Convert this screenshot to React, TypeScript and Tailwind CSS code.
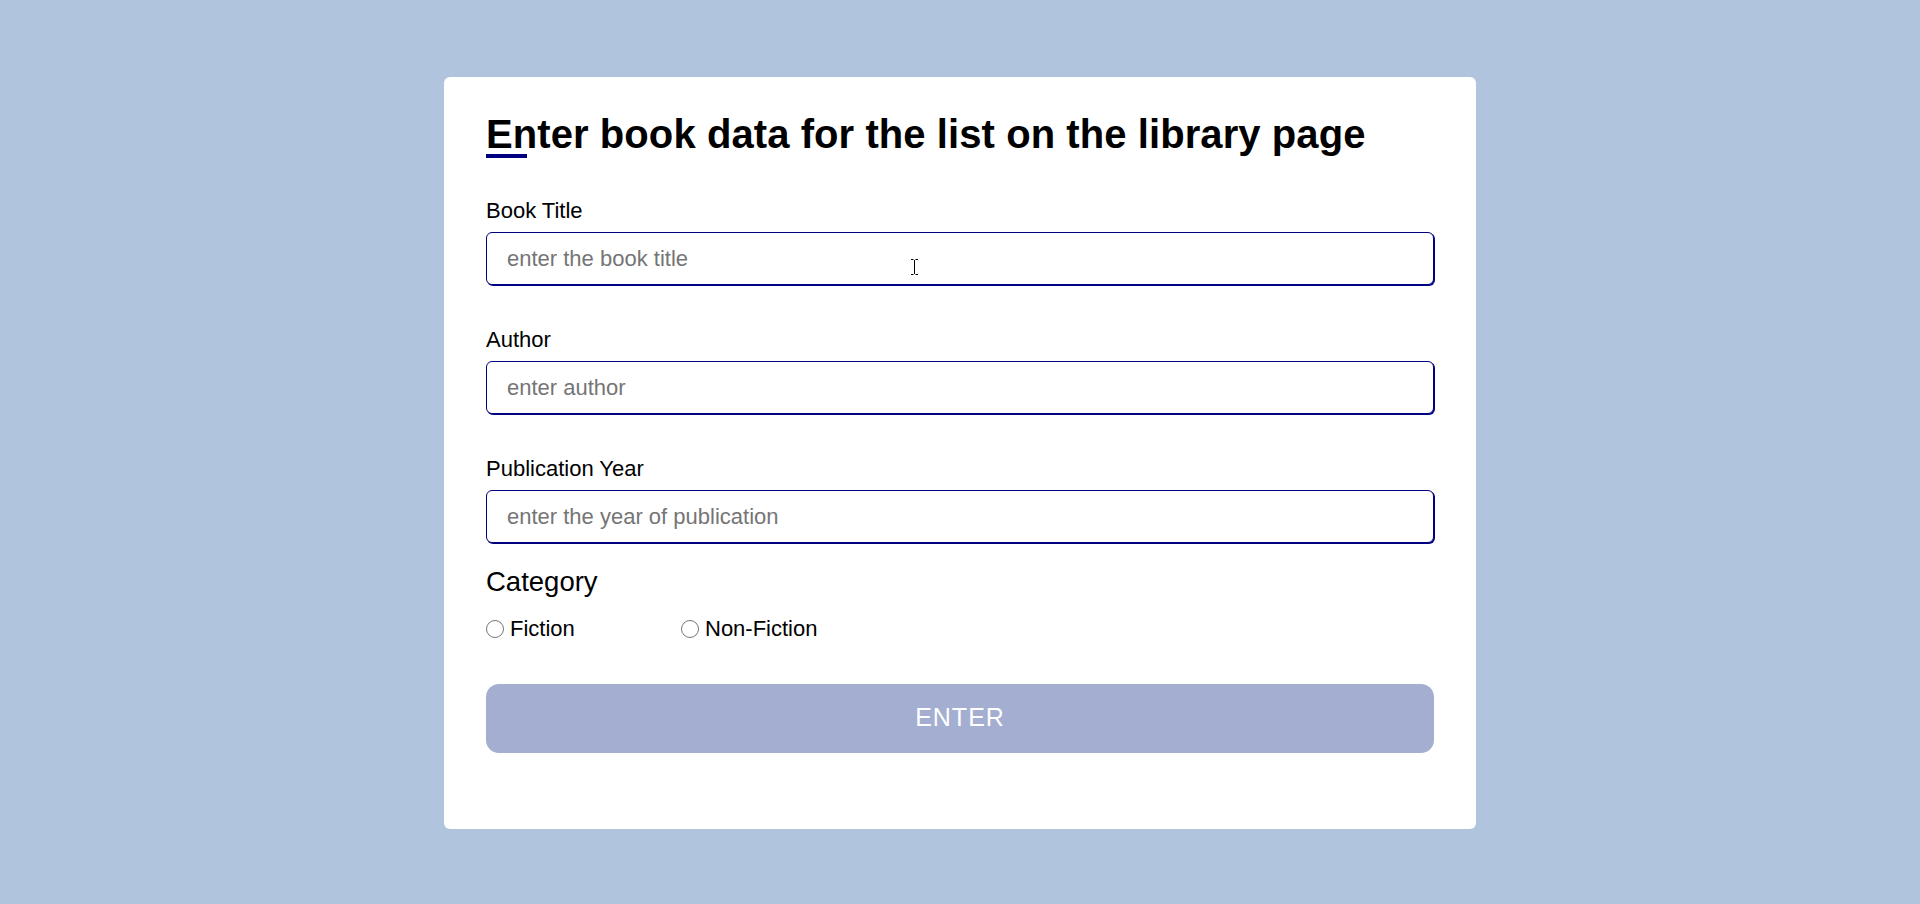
import React from "react";

function Field({ label, placeholder, first }: { label: string; placeholder: string; first?: boolean }) {
  return (
    <div className={first ? "mt-[42px] flex flex-col" : "mt-[44px] flex flex-col"}>
      <label className="text-[22px] leading-[22px] text-black">{label}</label>
      <input
        type="text"
        placeholder={placeholder}
        className="mt-[10px] h-[53px] w-full rounded-[6px] border border-[#000080] bg-white pl-[20px] text-[22px] text-black shadow-[1px_1px_0_#000080] outline-none placeholder:text-[#757575]"
      />
    </div>
  );
}

function Radio({ label, name, wide }: { label: string; name: string; wide?: boolean }) {
  return (
    <label className={wide ? "flex w-[195px] items-center" : "flex items-center"}>
      <input
        type="radio"
        name={name}
        className="m-0 h-[18px] w-[18px] appearance-none rounded-full border border-[#767676] bg-white"
      />
      <span className="ml-[6px] text-[22px] leading-[22px] text-black">{label}</span>
    </label>
  );
}

export default function App() {
  return (
    <div className="relative min-h-[904px] w-full bg-[#b0c4de] pt-[77px] font-['Liberation_Sans',Arial,sans-serif]">
      <div className="mx-auto w-[1032px] rounded-[6px] bg-white px-[42px] pb-[76px] pt-[37px]">
        <h1 className="text-[40px] font-bold leading-[40px] tracking-[0.08px] text-black">
          Enter book data for the list on the library page
        </h1>
        <div className="h-[4px] w-[41px] bg-[#000080]" />
        <Field first label="Book Title" placeholder="enter the book title" />
        <Field label="Author" placeholder="enter author" />
        <Field label="Publication Year" placeholder="enter the year of publication" />
        <div className="mt-[25px] text-[27.5px] leading-[27.5px] text-black">Category</div>
        <div className="mt-[22px] flex items-center">
          <Radio wide label="Fiction" name="category" />
          <Radio label="Non-Fiction" name="category" />
        </div>
        <button
          type="button"
          className="mt-[44px] flex h-[69px] w-full items-center justify-center rounded-[13px] bg-[#a3aed1] text-[25px] tracking-[1px] text-white"
        >
          ENTER
        </button>
      </div>
      <svg
        className="pointer-events-none absolute left-[910px] top-[259px]"
        width="9"
        height="16"
        viewBox="0 0 9 16"
      >
        <path d="M1 0.5H3.5M5.5 0.5H8M4.5 1V15M1 15.5H3.5M5.5 15.5H8" stroke="#000" strokeWidth="1" fill="none" />
      </svg>
    </div>
  );
}
